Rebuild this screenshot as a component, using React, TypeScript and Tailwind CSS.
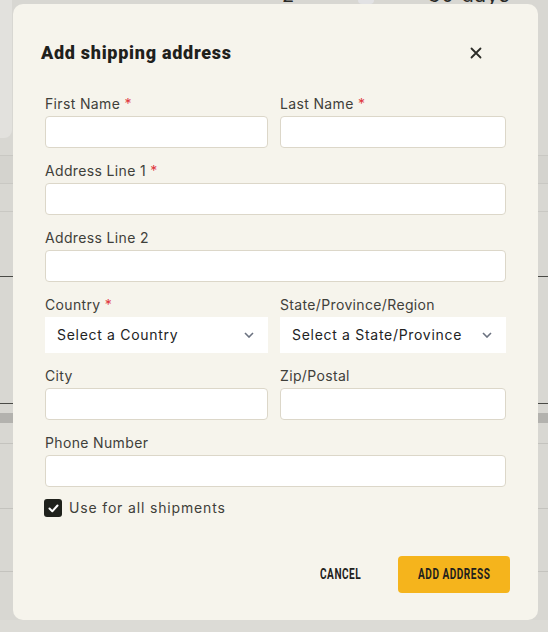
import React from 'react'

const bodyFont = { fontFamily: 'Inter, "Open Sans", sans-serif' }

function Label({ text, required }: { text: string; required?: boolean }) {
  return (
    <label className="block h-5 text-sm leading-5 tracking-wide text-[#3f403a]">
      {text}
      {required && <span className="text-[#e0383e]"> *</span>}
    </label>
  )
}

function TextField({ label, required }: { label: string; required?: boolean }) {
  return (
    <div className="flex flex-col gap-[2px]">
      <Label text={label} required={required} />
      <input
        type="text"
        className="h-8 w-full rounded-[4px] border border-[#dcd7c9] bg-white px-3 text-sm outline-none"
      />
    </div>
  )
}

function SelectField({ label, placeholder, required }: { label: string; placeholder: string; required?: boolean }) {
  return (
    <div className="flex flex-col gap-[2px]">
      <Label text={label} required={required} />
      <button
        type="button"
        className="flex h-9 w-full items-center justify-between bg-white pl-3 pr-[14px] text-left text-sm tracking-wider text-[#22231f]"
      >
        <span>{placeholder}</span>
        <svg width="10" height="6" viewBox="0 0 10 6" fill="none" stroke="#6b7280" strokeWidth="1.6">
          <path d="M1 1l4 4 4-4" />
        </svg>
      </button>
    </div>
  )
}

export default function App() {
  return (
    <div className="relative h-[632px] w-full overflow-hidden bg-[#d8d7d2]" style={bodyFont}>
      {/* page behind the overlay */}
      <div className="flex h-full flex-col">
        <div className="relative flex h-[155px] shrink-0">
          <div className="h-[138px] w-[12px] rounded-br-lg bg-[#e2e1dd]" />
          <div className="absolute left-[282px] top-[-17px] text-xl leading-6 text-[#2a2a27]">2</div>
          <div className="absolute left-[358px] top-0 h-[4px] w-[16px] rounded-b bg-[#e2e2e4]" />
          <div className="absolute left-[428px] top-[-17px] text-xl leading-6 tracking-wider text-[#2a2a27]">30 days</div>
        </div>
        <div className="h-[28px] shrink-0 border-t border-[#c9c8c3] bg-[#d4d3ce]" />
        <div className="h-[28px] shrink-0 border-t border-[#c9c8c3]" />
        <div className="h-[65px] shrink-0 border-t border-[#c9c8c3]" />
        <div className="h-[127px] shrink-0 border-t border-[#4a4a46]" />
        <div className="h-[10px] shrink-0 border-t border-[#4a4a46]" />
        <div className="h-[10px] shrink-0 bg-[#b3b2ae]" />
        <div className="h-[20px] shrink-0" />
        <div className="h-[65px] shrink-0 border-t border-[#c4c3be]" />
        <div className="h-[63px] shrink-0 border-t border-[#c4c3be]" />
        <div className="h-[49px] shrink-0 border-t border-[#c4c3be]" />
        <div className="flex-1 bg-[#dcdbd6]" />
      </div>

      {/* modal */}
      <div className="absolute left-[13px] top-[4px] w-[525px] rounded-[10px] bg-[#f6f4ec] px-7 pb-[27px] pt-[37px]">
        <div className="flex h-6 items-center justify-between">
          <h2
            className="text-[18px] font-black leading-6 tracking-[0.04em] text-[#1f211c]"
            style={{ fontFamily: 'Roboto, "DejaVu Sans", sans-serif' }}
          >
            Add shipping address
          </h2>
          <button type="button" className="mr-[22px] flex h-6 w-6 items-center justify-center">
            <svg width="12" height="12" viewBox="0 0 12 12" fill="none" stroke="#2b2c27" strokeWidth="1.8" strokeLinecap="round">
              <path d="M1.5 1.5l9 9M10.5 1.5l-9 9" />
            </svg>
          </button>
        </div>

        <div className="mt-[29px] flex flex-col gap-[13px] px-1">
          <div className="grid grid-cols-[223px_1fr] gap-3">
            <TextField label="First Name" required />
            <TextField label="Last Name" required />
          </div>
          <TextField label="Address Line 1" required />
          <TextField label="Address Line 2" />
          <div className="grid grid-cols-[223px_1fr] gap-3">
            <SelectField label="Country" placeholder="Select a Country" required />
            <SelectField label="State/Province/Region" placeholder="Select a State/Province" />
          </div>
          <div className="grid grid-cols-[223px_1fr] gap-3">
            <TextField label="City" />
            <TextField label="Zip/Postal" />
          </div>
          <TextField label="Phone Number" />
        </div>

        <label className="ml-[3px] mt-[11px] flex items-center gap-[7px]">
          <span className="flex h-[18px] w-[18px] items-center justify-center rounded-[3px] bg-[#1f211c]">
            <svg width="11" height="9" viewBox="0 0 11 9" fill="none" stroke="white" strokeWidth="2" strokeLinecap="round" strokeLinejoin="round">
              <path d="M1.5 4.5l2.8 2.8L9.5 1.5" />
            </svg>
          </span>
          <span className="text-sm leading-5 tracking-[0.06em] text-[#3f403a]">Use for all shipments</span>
        </label>

        <div
          className="mt-[38px] flex items-center justify-end gap-[17px] text-[14px] font-bold tracking-wider text-[#1f211c]"
          style={{ fontFamily: 'Roboto, sans-serif' }}
        >
          <button type="button" className="flex h-[37px] w-[80px] items-center justify-center">
            <span className="inline-block scale-x-[0.72] uppercase">Cancel</span>
          </button>
          <button
            type="button"
            className="flex h-[37px] w-[112px] items-center justify-center rounded-[4px] bg-[#f5b41c]"
          >
            <span className="inline-block whitespace-nowrap scale-x-[0.72] uppercase">Add Address</span>
          </button>
        </div>
      </div>
    </div>
  )
}
